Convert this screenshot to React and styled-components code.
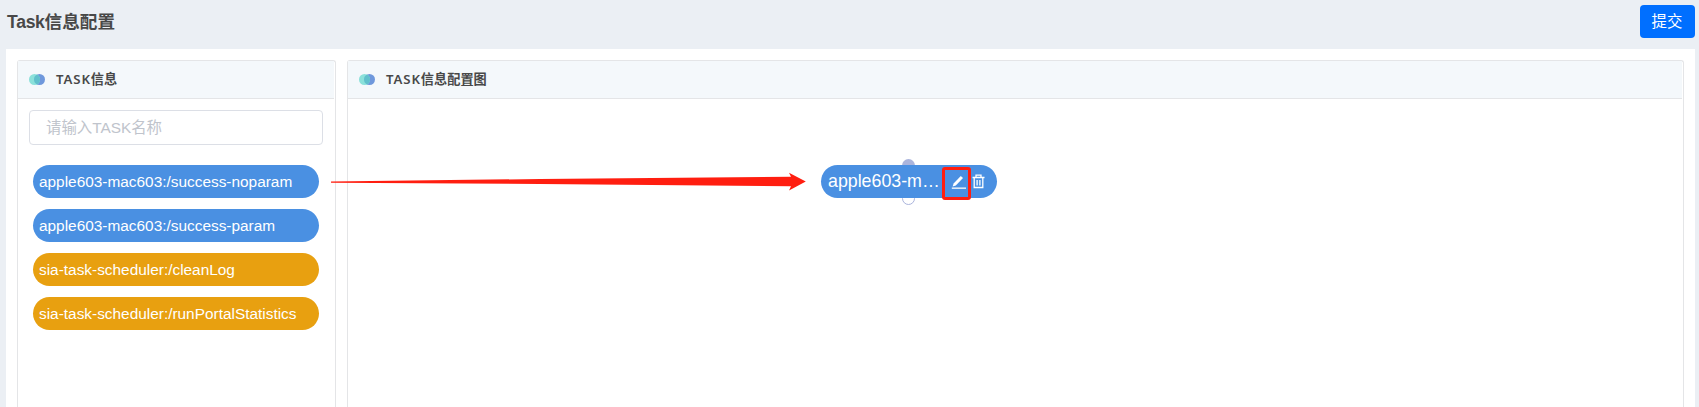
import React from "react";
import styled, { createGlobalStyle } from "styled-components";

const Global = createGlobalStyle`
  *, *::before, *::after { box-sizing: border-box; }
  body { margin: 0; background: #ebeff4; overflow: hidden;
    font-family: "Liberation Sans", "Noto Sans CJK SC", sans-serif; color: #484848; }
`;
const Page = styled.div`
  display: flex; flex-direction: column; height: 407px; padding: 0 4px 0 6px;
`;
const TopBar = styled.header`
  display: flex; justify-content: space-between; height: 49px; padding-top: 5px;
`;
const Title = styled.h1`
  margin: 0; padding-left: 1px; font-size: 17.6px; line-height: 35px; font-weight: 700;
`;
const Latin = styled.span`
  letter-spacing: ${(p) => p.$spacing};
`;
const Submit = styled.button`
  width: 55px; height: 33px; padding: 0 1px 0 0; border: 0; border-radius: 4px;
  background: #006fff; color: #fff; font: inherit; font-size: 15.4px; line-height: 34px;
`;
const Content = styled.main`
  position: relative; flex: 1; display: flex; gap: 11px; padding: 11px 11px 0; background: #fff;
`;
const Panel = styled.section`
  flex: ${(p) => (p.$width ? `0 0 ${p.$width}` : "1")};
  border: 1px solid #e4e5e7; border-bottom: 0; border-radius: 3px 3px 0 0; padding-right: 1px;
`;
const PanelHead = styled.div`
  display: flex; align-items: center; gap: 11px; height: 38px; padding-left: 11px;
  border-bottom: 1px solid #e4e5e7; background: #f4f8fb;
`;
const PanelTitle = styled.h2`
  margin: 0; padding-bottom: 2px; font-family: "Noto Sans", "Noto Sans CJK SC", sans-serif;
  font-size: 13.2px; line-height: 20px; font-weight: 600;
`;
const Side = styled.div`
  padding: 11px 11px 0;
`;
const Search = styled.input`
  display: block; width: 294px; height: 35px; padding: 0 16px; border: 1px solid #dcdfe6;
  border-radius: 4px; font: inherit; font-size: 15.4px; outline: 0;
  &::placeholder { color: #c0c4cc; opacity: 1; }
`;
const TaskList = styled.div`
  display: flex; flex-direction: column; gap: 11px; padding: 20px 4px 0;
`;
const Task = styled.div`
  width: 286px; height: 33px; padding-left: 6px; border-radius: 17px; white-space: nowrap;
  background: ${(p) => (p.$tone === "blue" ? "#4a90e2" : "#e8a010")};
  color: #fff; font-size: 15.4px; line-height: 34px;
`;
const Node = styled.div`
  position: absolute; left: 815px; top: 116px; display: flex; align-items: center;
  width: 176px; height: 33px; padding-left: 7px;
`;
const NodeBody = styled.div`
  position: absolute; inset: 0; border-radius: 17px; background: #4a90e2;
`;
const Port = styled.span`
  position: absolute; left: 81px; width: 13px; height: 13px; border-radius: 50%;
  ${(p) => (p.$side === "top" ? "top: -6px; background: #aab4dc;" : "bottom: -7px; background: #fff; border: 1px solid #aab4dc;")}
`;
const NodeName = styled.span`
  position: relative; width: 121px; color: #fff; font-size: 17.8px; line-height: 33px; white-space: nowrap;
`;
const EditIcon = styled.svg`
  position: relative; margin-left: 2px; width: 16px; height: 16px;
`;
const TrashIcon = styled.svg`
  position: relative; margin-left: 5px; width: 14px; height: 15px;
`;
const Highlight = styled.div`
  position: absolute; left: 121px; top: 2px; width: 29px; height: 33px;
  border: 3px solid #ff1e10; border-radius: 3px;
`;
const Arrow = styled.svg`
  position: absolute; left: 324px; top: 121px; width: 478px; height: 22px;
`;

const Toggle = () => (
  <svg width="16" height="12" viewBox="0 0 16 12">
    <circle cx="10.5" cy="5.5" r="5.5" fill="#6f98dc" />
    <circle cx="5.5" cy="5.5" r="5.5" fill="#8be1da" />
    <path d="M8 0.6a5.5 5.5 0 0 1 0 9.8a5.5 5.5 0 0 1 0-9.8Z" fill="#60c0cc" />
  </svg>
);

const tasks = [
  ["apple603-mac603:/success-noparam", "blue"],
  ["apple603-mac603:/success-param", "blue"],
  ["sia-task-scheduler:/cleanLog", "orange"],
  ["sia-task-scheduler:/runPortalStatistics", "orange"],
];

export default function App() {
  return (
    <Page>
      <Global />
      <TopBar>
        <Title><Latin $spacing="-0.3px">Task</Latin>信息配置</Title>
        <Submit>提交</Submit>
      </TopBar>
      <Content>
        <Panel $width="319px">
          <PanelHead><Toggle /><PanelTitle><Latin $spacing="0.9px">TASK</Latin>信息</PanelTitle></PanelHead>
          <Side>
            <Search placeholder="请输入TASK名称" />
            <TaskList>
              {tasks.map(([name, tone]) => <Task key={name} $tone={tone}>{name}</Task>)}
            </TaskList>
          </Side>
        </Panel>
        <Panel>
          <PanelHead><Toggle /><PanelTitle><Latin $spacing="0.9px">TASK</Latin>信息配置图</PanelTitle></PanelHead>
        </Panel>
        <Arrow viewBox="0 0 478 22">
          <path d="M1 11.5L210 9L461 6.8L459 2.7L475.8 11.6L459 20.6L461 16.2L210 14L1 12.7Z" fill="#ff1e10" />
        </Arrow>
        <Node>
          <Port $side="top" />
          <Port $side="bottom" />
          <NodeBody />
          <NodeName>apple603-m…</NodeName>
          <EditIcon viewBox="0 0 16 16" fill="#fff">
            <path d="M2.6 9.5L9.8 2L12 4.1L4.8 11.6L1.6 12.6Z" />
            <path d="M0.8 13.5H15V14.8H0.8Z" />
          </EditIcon>
          <TrashIcon viewBox="0 0 14 15" fill="none" stroke="#fff" strokeWidth="1.3">
            <path d="M0.5 3.5H12.5M4 3V1.2H9V3M2.2 3.5V13.5H10.8V3.5M5.1 6V11.5M7.9 6V11.5" />
          </TrashIcon>
          <Highlight />
        </Node>
      </Content>
    </Page>
  );
}
